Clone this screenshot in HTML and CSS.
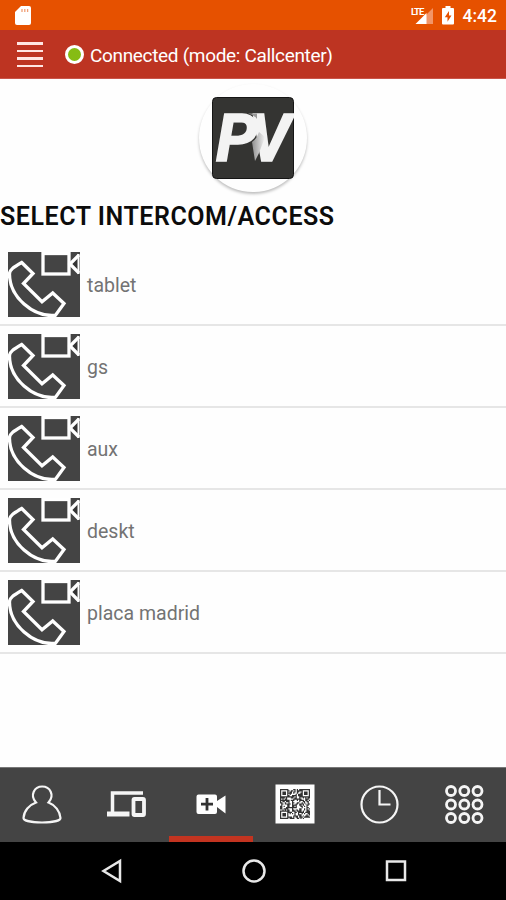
FILE: index.html
```html
<!DOCTYPE html>
<html lang="en">
<head>
    <meta charset="UTF-8">
    <meta name="viewport" content="width=device-width, initial-scale=1.0">
    <title>Select Intercom</title>
    <link rel="stylesheet" href="styles.css">
</head>
<body>
    <svg class="defs" width="0" height="0">
        <symbol id="intercom" viewBox="0 0 72 65">
            <rect width="72" height="65" fill="#444" stroke="none"/>
            <rect x="35" y="1.500" width="26" height="20.500"/>
            <path d="M71 3L62 12L71 21" fill="#333"/>
            <path d="M70.500 2V22" stroke-width="2"/>
            <path d="M13.700 10.500L25 21.500L15.500 31.500L34 49.700L44.700 41L56 51.500L47.500 63.300C25 65.500 1.500 45 1.500 22C1.500 18 5 15.500 13.700 10.500Z"/>
        </symbol>
    </svg>

    <div class="status-bar">
        <svg class="sd-icon" width="16" height="20" viewBox="0 0 16 20">
            <path d="M6 0H14Q16 0 16 2V17Q16 19 14 19H2Q0 19 0 17V6Z" fill="#fff"/>
            <path d="M7 3V6M9.800 3V6M12.600 3V6" stroke="#f0a078" stroke-width="1.300"/>
        </svg>
        <div class="status-right">
            <svg width="23" height="20" viewBox="0 0 23 20">
                <path d="M22 2V18H15V9Z" fill="#f29567"/>
                <path d="M4.500 18L15.500 7V18Z" fill="#fff"/>
                <text x="0" y="8.500" class="lte">LTE</text>
            </svg>
            <svg class="battery" width="12" height="20" viewBox="0 0 12 20">
                <path d="M3.500 0H8.500V2H11Q12 2 12 3V17.500Q12 18.500 11 18.500H1Q0 18.500 0 17.500V3Q0 2 1 2H3.500Z" fill="#fff"/>
                <path d="M7 5L2.800 11.200H5.500V15.800L9.500 9.500H7Z" fill="#e65100"/>
            </svg>
            <span class="time">4:42</span>
        </div>
    </div>

    <div class="header">
        <div class="menu"><span></span><span></span><span></span><span></span></div>
        <div class="dot"></div>
        <div class="status-text">Connected (mode: Callcenter)</div>
    </div>

    <div class="content">
        <div class="logo">
            <svg width="82" height="82" viewBox="0 0 82 82">
                <defs>
                    <linearGradient id="fold">
                        <stop offset="0" stop-color="#909090"/>
                        <stop offset="1" stop-color="#f3f3f3"/>
                    </linearGradient>
                </defs>
                <rect x="0.500" y="0.500" width="81" height="81" rx="4" fill="#343432" stroke="#151515"/>
                <text x="4" y="64" class="logo-letter">PV</text>
                <path d="M40 45Q45 42 47 35L53 40L47 56L43 64Z" fill="url(#fold)"/>
                <path d="M36 16.500H45V22Q42 17.500 36 16.500Z" fill="#999"/>
            </svg>
        </div>
        <h2>SELECT INTERCOM/ACCESS</h2>
        <div class="list">
            <div class="row"><svg class="row-icon"><use href="#intercom"/></svg><span>tablet</span></div>
            <div class="row"><svg class="row-icon"><use href="#intercom"/></svg><span>gs</span></div>
            <div class="row"><svg class="row-icon"><use href="#intercom"/></svg><span>aux</span></div>
            <div class="row"><svg class="row-icon"><use href="#intercom"/></svg><span>deskt</span></div>
            <div class="row"><svg class="row-icon"><use href="#intercom"/></svg><span>placa madrid</span></div>
        </div>
    </div>

    <div class="tabs">
        <div class="tab">
            <svg width="40" height="40" viewBox="0 0 40 40">
                <path d="M14 18.500C7 21 2 27 1.500 34C1.500 36.500 9 38.500 20 38.500S38.500 36.500 38.500 34C38 27 33 21 26.500 18.500C33 11 28 2.500 20.200 2.500S7.500 11 14 18.500Z"/>
            </svg>
        </div>
        <div class="tab">
            <svg width="40" height="40" viewBox="0 0 40 40">
                <path d="M37 9H6.500V29" stroke-width="3.500"/>
                <path d="M1 30H23.500" stroke-width="5"/>
                <rect x="27.500" y="15" width="10.500" height="16" rx="1" stroke-width="3.800"/>
            </svg>
        </div>
        <div class="tab active">
            <svg width="40" height="40" viewBox="0 0 40 40">
                <path d="M7.500 10.500H24Q26 10.500 26 12.500V17L34.500 11.500V29.500L26 23V28Q26 30 24 30H7.500Q5.500 30 5.500 28V12.500Q5.500 10.500 7.500 10.500Z" fill="#fff" stroke="none"/>
                <path d="M16 14V26.500M10 20.200H22" class="plus"/>
            </svg>
        </div>
        <div class="tab">
            <svg class="qr" id="qr" width="40" height="40" viewBox="0 0 40 40">
                <rect x="0.500" y="0.500" width="39" height="39" fill="#fff" stroke="none"/>
            </svg>
        </div>
        <div class="tab">
            <svg width="40" height="40" viewBox="0 0 40 40">
                <circle cx="20.500" cy="20.500" r="18"/>
                <path d="M20.500 6V20.500H31.500"/>
            </svg>
        </div>
        <div class="tab">
            <svg width="40" height="40" viewBox="0 0 40 40" class="dots">
                <circle cx="7" cy="7" r="4.500"/><circle cx="20.300" cy="7" r="4.500"/><circle cx="33.500" cy="7" r="4.500"/>
                <circle cx="7" cy="20.500" r="4.500"/><circle cx="20.300" cy="20.500" r="4.500"/><circle cx="33.500" cy="20.500" r="4.500"/>
                <circle cx="7" cy="34" r="4.500"/><circle cx="20.300" cy="34" r="4.500"/><circle cx="33.500" cy="34" r="4.500"/>
            </svg>
        </div>
    </div>

    <div class="nav-bar">
        <svg width="24" height="26" viewBox="0 0 24 26"><path d="M20 3V23L3.500 13Z"/></svg>
        <svg width="26" height="26" viewBox="0 0 26 26"><circle cx="13" cy="13" r="10.500"/></svg>
        <svg width="24" height="26" viewBox="0 0 24 26"><rect x="3" y="3.500" width="18" height="18.500"/></svg>
    </div>

    <script>
        // fill the QR icon with modules
        const size = 25;
        const cell = 30 / size;
        let seed = 7;
        let d = "";
        function finder(x, y) {
            const ring = Math.max(Math.abs(x - 3), Math.abs(y - 3));
            return ring === 3 || ring <= 1;
        }
        for (let y = 0; y < size; y++) {
            for (let x = 0; x < size; x++) {
                seed = (seed * 16807) % 2147483647;
                let on = seed % 100 < 55;
                if (x < 7 && y < 7) on = finder(x, y);
                if (x > size - 8 && y < 7) on = finder(x - size + 7, y);
                if (x < 7 && y > size - 8) on = finder(x, y - size + 7);
                if (on) d += `M${5 + x * cell} ${5 + y * cell}h${cell}v${cell}h-${cell}z`;
            }
        }
        const path = document.createElementNS("http://www.w3.org/2000/svg", "path");
        path.setAttribute("d", d);
        path.setAttribute("class", "modules");
        document.getElementById("qr").appendChild(path);
    </script>
</body>
</html>
```
FILE: styles.css
```css
* {
    margin: 0;
    padding: 0;
    box-sizing: border-box;
    font-family: Roboto, Arial, sans-serif;
}
body {
    background-color: #fefefe;
    display: flex;
    flex-direction: column;
    height: 100vh;
    overflow: hidden;
}
svg {
    display: block;
}
.defs {
    position: absolute;
}
.status-bar {
    height: 30px;
    background-color: #e65100;
    display: flex;
    justify-content: space-between;
    align-items: flex-start;
    padding: 6px 9px 0 15px;
}
.status-right {
    display: flex;
}
.battery {
    margin-left: 8px;
}
.lte {
    font-size: 9.5px;
    font-weight: bold;
    fill: #fff;
    letter-spacing: -1px;
}
.time {
    margin-left: 9px;
    color: #fff;
    font-size: 17.5px;
    font-weight: 500;
    line-height: 20px;
}
.header {
    height: 49px;
    background-color: #bd3422;
    border-bottom: 1px solid #c9554a;
    display: flex;
    align-items: center;
    padding: 0 17px;
}
.menu {
    width: 26px;
    display: flex;
    flex-direction: column;
    gap: 5px;
    padding-top: 1px;
}
.menu span {
    height: 2.5px;
    background: #ffe6e3;
}
.dot {
    width: 19px;
    height: 19px;
    margin: 0 6px 0 22px;
    border: 3px solid #fff;
    border-radius: 50%;
    background: #86bc14;
}
.status-text {
    color: #fff;
    font-size: 19px;
    letter-spacing: -0.33px;
    padding-top: 2px;
}
.content {
    flex: 1;
}
.logo {
    width: 108px;
    height: 108px;
    margin: 5px auto 0;
    padding: 13px;
    border-radius: 50%;
    box-shadow: 0 2px 3px rgba(0, 0, 0, 0.25);
}
.logo-letter {
    font-size: 66px;
    font-weight: bold;
    font-style: italic;
    letter-spacing: -8.5px;
    fill: #f3f3f3;
    stroke: #f3f3f3;
    stroke-width: 1.5;
}
h2 {
    color: #0c0c0c;
    font-size: 25px;
    font-weight: 600;
    letter-spacing: 0.55px;
    line-height: 30px;
    margin-top: 10px;
}
.list {
    margin-top: 12px;
}
.row {
    height: 82px;
    display: flex;
    align-items: center;
    padding-left: 8px;
    border-bottom: 2px solid #e6e6e6;
    color: #737373;
    font-size: 19.5px;
}
.row span {
    padding-top: 3px;
}
.row-icon {
    width: 72px;
    height: 65px;
    margin-right: 7px;
    fill: none;
    stroke: #fff;
    stroke-width: 3.3;
}
.tabs {
    height: 75px;
    background-color: #444;
    border-top: 1px solid #777;
    display: flex;
}
.tab {
    flex: 1;
    display: flex;
    justify-content: center;
    padding-top: 16px;
    border-bottom: 6px solid transparent;
}
.tab.active {
    border-bottom-color: #c33420;
}
.tab svg {
    fill: none;
    stroke: #f5f5f5;
    stroke-width: 2.2;
}
.tab .plus {
    stroke: #333;
    stroke-width: 2.8;
}
.tab .dots {
    stroke-width: 2.8;
}
.tab .modules {
    fill: #333;
    stroke: none;
}
.nav-bar {
    height: 58px;
    background: #000;
    display: flex;
    justify-content: space-between;
    align-items: center;
    padding: 0 98px 0 100px;
}
.nav-bar svg {
    fill: none;
    stroke: #e8e8e8;
    stroke-width: 2.5;
}
```
